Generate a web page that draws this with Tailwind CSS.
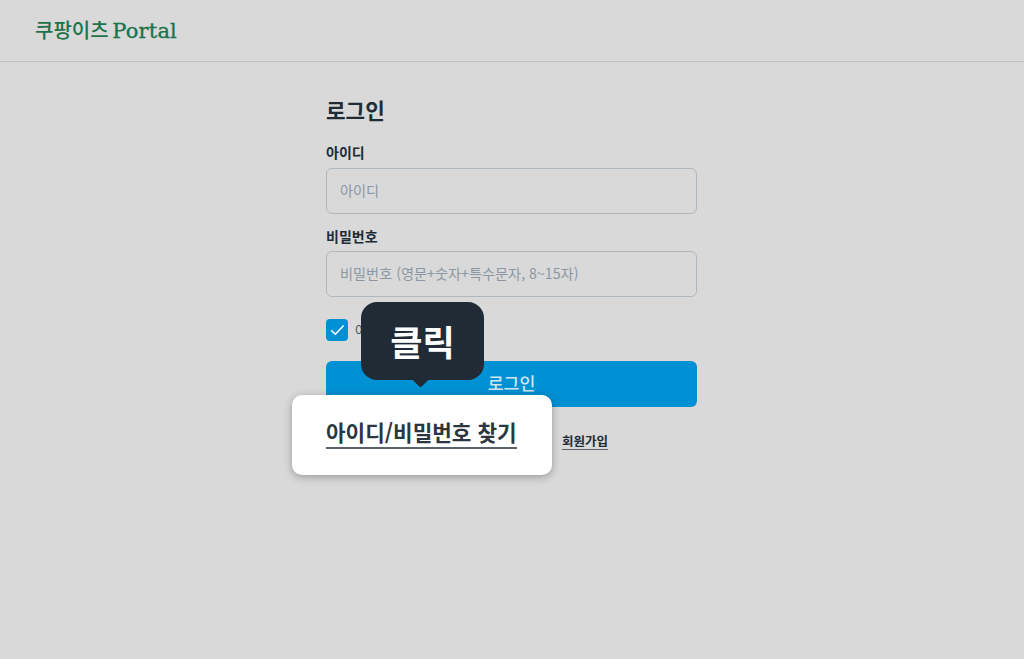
<!DOCTYPE html>
<html lang="ko">
<head>
  <meta charset="UTF-8" />
  <title>쿠팡이츠 Portal - 로그인</title>
  <script src="https://cdn.jsdelivr.net/npm/@tailwindcss/browser@4"></script>
</head>
<body class="relative min-h-[659px] h-[659px] overflow-hidden bg-[#d9d9d9] text-[#212b36] font-['Noto_Sans_CJK_KR','Noto_Sans',sans-serif]">

  <header class="h-[62px] border-b border-[#bfc2c1] pl-[35px] flex items-center">
    <span class="text-[20px] font-medium leading-none text-[#1b7349] font-['Noto_Sans_CJK_KR',sans-serif]">쿠팡이츠 <span class="font-['DejaVu_Serif',serif] text-[21px] ml-[-2px] tracking-[0.2px] [-webkit-text-stroke:0.35px_#1b7349]">Portal</span></span>
  </header>

  <main class="w-[371px] ml-[326px] pt-[33px]">
    <h1 class="text-[21.3px] font-bold leading-[30px] mb-[17px]">로그인</h1>

    <label class="block text-[14px] font-bold leading-[20px] mb-[6px]">아이디</label>
    <div class="h-[46px] border border-[#b0b8bf] rounded-[6px] px-[13px] flex items-center text-[14.2px] text-[#8a97a3]">아이디</div>

    <label class="block text-[14px] font-bold leading-[20px] mt-[12px] mb-[5px]">비밀번호</label>
    <div class="h-[46px] border border-[#b0b8bf] rounded-[6px] px-[13px] flex items-center text-[14.2px] text-[#8a97a3]">비밀번호 (영문+숫자+특수문자, 8~15자)</div>

    <div class="flex items-center gap-[7px] mt-[22px] h-[22px]">
      <span class="w-[22px] h-[22px] rounded-[4px] bg-[#0090d4] flex items-center justify-center">
        <svg width="15" height="12" viewBox="0 0 15 12" fill="none"><path d="M1.2 6.2 L5.4 10.2 L13.6 1.4" stroke="#ffffff" stroke-width="1.5"/></svg>
      </span>
      <span class="text-[13px] text-[#4a5560]">아이디 저장</span>
    </div>

    <button class="block w-full h-[46px] mt-[20px] pb-[2px] rounded-[6px] bg-[#0090d4] text-[#cfe6f2] text-[17.3px] font-medium">로그인</button>

    <div class="flex justify-end pr-[89px] mt-[25px]">
      <a class="text-[12.5px] font-bold leading-[17px] border-b-[1.5px] border-[#5a636c]">회원가입</a>
    </div>
  </main>

  <!-- 강조 영역 -->
  <div class="absolute left-[292px] top-[395px] w-[260px] h-[80px] bg-white rounded-[10px] shadow-[0_2px_8px_rgba(0,0,0,0.3)] pl-[34px] pt-[22px]">
    <a class="inline-block text-[21.3px] font-bold leading-[30px] border-b-2 border-[#5a636c] text-[#2c3640]">아이디/비밀번호 찾기</a>
  </div>

  <!-- 툴팁 -->
  <div class="absolute left-[361px] top-[302px] w-[123px] h-[78px] bg-[#212b36] rounded-[16px] flex items-center justify-center text-white text-[35px] font-bold">
    클릭
    <span class="absolute left-[53px] bottom-[-5px] w-[13px] h-[13px] rotate-45 bg-[#212b36] rounded-[2px]"></span>
  </div>

</body>
</html>
